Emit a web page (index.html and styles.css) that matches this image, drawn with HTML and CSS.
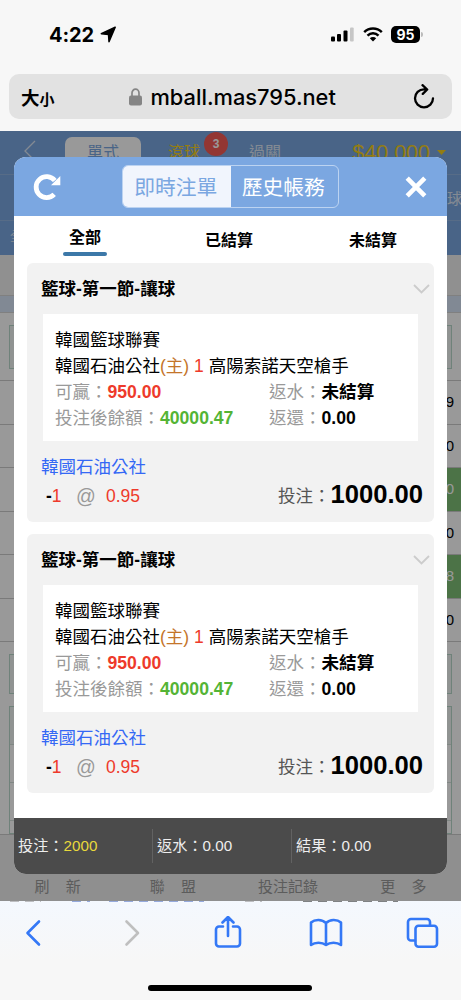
FILE: index.html
```html
<!DOCTYPE html>
<html lang="zh-Hant">
<head>
    <meta charset="UTF-8">
    <meta name="viewport" content="width=device-width, initial-scale=1.0">
    <title>即時注單</title>
    <link rel="stylesheet" href="styles.css">
</head>
<body>
    <div class="browser-top">
        <div class="status-bar">
            <span class="time">4:22</span>
            <svg class="location" width="17" height="17" viewBox="0 0 17 17"><path d="M15.200 1.300 1.300 7.800l7.200.7.500 7.200z" stroke="#000" stroke-width="1.500" stroke-linejoin="round"/></svg>
            <div class="status-icons">
                <svg width="24" height="15" viewBox="0 0 24 15">
                    <rect x="0" y="9.500" width="4" height="5" rx="1"/>
                    <rect x="6" y="7" width="4" height="7.500" rx="1"/>
                    <rect x="12.500" y="3.500" width="4" height="11" rx="1"/>
                    <rect x="19" y="0.500" width="3.700" height="14" rx="1" fill="#c6c6c6"/>
                </svg>
                <svg class="wifi" width="20" height="15" viewBox="0 0 20 15">
                    <path d="M1.200 5.200a12.600 12.600 0 0 1 17.600 0M4.500 8.600a7.900 7.900 0 0 1 11 0" fill="none" stroke="#000" stroke-width="2.500"/>
                    <path d="M10 14.500 6.800 11.300a4.600 4.600 0 0 1 6.400 0z"/>
                </svg>
                <span class="battery">95</span>
                <span class="battery-tip"></span>
            </div>
        </div>
        <div class="address-bar">
            <div class="text-size">大<small>小</small></div>
            <svg class="lock" width="13" height="18" viewBox="0 0 13 18"><path d="M3 8V5a3.500 3.800 0 0 1 7 0v3" fill="none" stroke="#858585" stroke-width="1.700"/><rect x="0" y="7.500" width="13" height="10" rx="2" fill="#858585"/></svg>
            <span class="url">mball.mas795.net</span>
            <svg class="reload" width="22" height="25" viewBox="0 0 22 25" fill="none" stroke="#000" stroke-width="2.300" stroke-linecap="round" stroke-linejoin="round"><path d="M11 5.300a9 9 0 1 0 9 9M11 5.300h3M9.500 1.200l4.700 4.300-4.400 4.400"/></svg>
        </div>
    </div>

    <div class="screen">
        <div class="page">
            <div class="page-header">
                <div class="page-nav">
                    <svg class="nav-back" width="12" height="22" viewBox="0 0 12 22" fill="none" stroke="#dbe6f5" stroke-width="1.300"><path d="M11 1 1 11l10 10"/></svg>
                    <span class="nav-active">單式</span>
                    <span class="nav-live">滾球<b class="nav-badge">3</b></span>
                    <span class="nav-parlay">過關</span>
                    <span class="nav-money">$40,000<i class="caret"></i></span>
                </div>
                <div class="page-sub">球</div>
                <div class="page-date">全</div>
            </div>
            <div class="page-gap"></div>
            <div class="page-strip"></div>
            <div class="page-box first"></div>
            <div class="odds">
                <div class="odd">9</div>
                <div class="odd">0</div>
                <div class="odd picked">0</div>
                <div class="odd">0</div>
                <div class="odd picked">8</div>
                <div class="odd">0</div>
            </div>
            <div class="page-box second"></div>
            <div class="page-box third"><div></div><div></div><div></div></div>
            <div class="page-footer">
                <span class="spaced">刷 新</span>
                <span class="spaced">聯 盟</span>
                <span>投注記錄</span>
                <span class="spaced">更 多</span>
            </div>
        </div>

        <div class="mask"></div>

        <div class="modal">
            <div class="modal-header">
                <svg width="28" height="28" viewBox="0 0 28 28"><path d="M21.200 21.400A10.500 10.500 0 1 1 21.800 7.500" fill="none" stroke="#fff" stroke-width="4.800"/><path d="M27.300 3v9.200H18z" fill="#fff"/></svg>
                <div class="switch">
                    <span class="on">即時注單</span>
                    <span>歷史帳務</span>
                </div>
                <svg class="close" width="22" height="22" viewBox="0 0 22 22"><path d="M2.200 2.200l17.600 17.600M19.800 2.200 2.200 19.800" stroke="#fff" stroke-width="4.600"/></svg>
            </div>
            <div class="tabs">
                <span class="tab current">全部</span>
                <span class="tab">已結算</span>
                <span class="tab">未結算</span>
            </div>

            <div class="bets">
                <div class="bet">
                    <div class="bet-title">籃球-第一節-讓球
                        <svg width="17" height="10" viewBox="0 0 17 10" fill="none" stroke="#ccc" stroke-width="1.800"><path d="M1 1l7.500 7.500L16 1"/></svg>
                    </div>
                    <div class="bet-info">
                        <div>韓國籃球聯賽</div>
                        <div>韓國石油公社<span class="home">(主)</span> <span class="red">1</span> 高陽索諾天空槍手</div>
                        <div class="cols"><span>可贏：<b class="red">950.00</b></span><span>返水：<b>未結算</b></span></div>
                        <div class="cols"><span>投注後餘額：<b class="green">40000.47</b></span><span>返還：<b>0.00</b></span></div>
                    </div>
                    <div class="pick">韓國石油公社</div>
                    <div class="stake">
                        <span class="line"><b>-</b>1</span>
                        <span class="at">@</span>
                        <span class="red">0.95</span>
                        <span class="amount">投注：<b>1000.00</b></span>
                    </div>
                </div>

                <div class="bet">
                    <div class="bet-title">籃球-第一節-讓球
                        <svg width="17" height="10" viewBox="0 0 17 10" fill="none" stroke="#ccc" stroke-width="1.800"><path d="M1 1l7.500 7.500L16 1"/></svg>
                    </div>
                    <div class="bet-info">
                        <div>韓國籃球聯賽</div>
                        <div>韓國石油公社<span class="home">(主)</span> <span class="red">1</span> 高陽索諾天空槍手</div>
                        <div class="cols"><span>可贏：<b class="red">950.00</b></span><span>返水：<b>未結算</b></span></div>
                        <div class="cols"><span>投注後餘額：<b class="green">40000.47</b></span><span>返還：<b>0.00</b></span></div>
                    </div>
                    <div class="pick">韓國石油公社</div>
                    <div class="stake">
                        <span class="line"><b>-</b>1</span>
                        <span class="at">@</span>
                        <span class="red">0.95</span>
                        <span class="amount">投注：<b>1000.00</b></span>
                    </div>
                </div>
            </div>

            <div class="totals">
                <div>投注：<span class="yellow">2000</span></div>
                <div>返水：0.00</div>
                <div>結果：0.00</div>
            </div>
        </div>
    </div>

    <div class="browser-bottom">
        <div class="peek"><i class="p1"></i><i class="p2"></i><i class="p3"></i><i class="p4"></i><i class="p5"></i></div>
        <div class="toolbar">
            <svg width="34" height="34" viewBox="0 0 34 34"><path d="M23 5.500 11.500 17 23 28.500"/></svg>
            <svg class="off" width="34" height="34" viewBox="0 0 34 34"><path d="M12.500 5.500 24 17 12.500 28.500"/></svg>
            <svg width="34" height="34" viewBox="0 0 34 34"><path d="M12 10.500H8a3 3 0 0 0-3 3V27.500a3 3 0 0 0 3 3h18a3 3 0 0 0 3-3V13.500a3 3 0 0 0-3-3h-4M17 20V1.500M11.500 6.500 17 1l5.500 5.500"/></svg>
            <svg width="34" height="34" viewBox="0 0 34 34"><path d="M17 7C13 3 6 3 2 6.500V29c4-3 11-3 15 0 4-3 11-3 15 0V6.500C28 3 21 3 17 7zM17 7v22"/></svg>
            <svg width="34" height="34" viewBox="0 0 34 34"><path d="M9 24.500H5a3 3 0 0 1-3-3V6a3 3 0 0 1 3-3h16a3 3 0 0 1 3 3v3.500"/><rect x="9.500" y="9.700" width="21.500" height="21" rx="3"/></svg>
        </div>
        <div class="home-bar"></div>
    </div>
</body>
</html>
```
FILE: styles.css
```css
* {
    box-sizing: border-box;
}
body {
    margin: 0;
    width: 461px;
    height: 1000px;
    overflow: hidden;
    font-family: "Liberation Sans", "Noto Sans CJK TC", sans-serif;
    color: #000;
    background: #f7f7f7;
}
svg {
    display: block;
    flex: none;
}

/* browser top */
.browser-top {
    height: 131px;
    background: #f7f7f7;
    font-family: Inter, "Noto Sans CJK TC", sans-serif;
}
.status-bar {
    display: flex;
    align-items: center;
    height: 74px;
    padding: 0 38px 5px 49px;
}
.time {
    width: 51px;
    font-size: 20px;
    font-weight: 700;
    letter-spacing: -0.1px;
}
.status-icons {
    display: flex;
    align-items: center;
    margin-left: auto;
}
.wifi {
    margin-left: 8px;
}
.battery {
    width: 29px;
    height: 17px;
    margin-left: 8px;
    border-radius: 5px;
    background: #000;
    color: #fff;
    font-size: 14px;
    font-weight: 700;
    line-height: 17px;
    text-align: center;
}
.battery-tip {
    width: 2px;
    height: 5px;
    margin-left: 1px;
    border-radius: 0 2px 2px 0;
    background: #bbb;
}
.address-bar {
    display: flex;
    align-items: center;
    height: 45px;
    margin: 0 9px;
    padding: 0 17px 0 12px;
    border-radius: 10px;
    background: #e2e2e2;
}
.text-size {
    width: 107px;
    font-size: 18.5px;
    font-weight: 700;
}
.text-size small {
    font-size: 15px;
}
.lock {
    margin-left: 0.500px;
}
.url {
    margin-left: 9px;
    font-size: 21.800px;
    font-weight: 500;
    white-space: nowrap;
}
.reload {
    margin-left: auto;
}

/* page behind the modal */
.screen {
    position: relative;
    height: 770px;
    overflow: hidden;
}
.page {
    display: flex;
    flex-direction: column;
    height: 770px;
    background: #fff;
}
.page-header {
    height: 124px;
    background: #7ba7e1;
    color: #dbe6f5;
}
.page-nav {
    display: flex;
    height: 44px;
    padding: 6px 15px 0 24px;
    border-bottom: 1px solid #92b4e2;
    font-size: 16px;
    line-height: 32px;
}
.nav-back {
    margin-top: 3px;
}
.nav-active {
    width: 76px;
    margin-left: 29px;
    border-radius: 7px 7px 0 0;
    background: #fff;
    color: #7ba7e1;
    text-align: center;
}
.nav-live {
    position: relative;
    margin-left: 27px;
    color: #f5d020;
}
.nav-badge {
    position: absolute;
    left: 36px;
    top: -5px;
    width: 24px;
    height: 24px;
    border-radius: 50%;
    background: #f55a55;
    color: #fff;
    font-size: 12px;
    line-height: 24px;
    text-align: center;
}
.nav-parlay {
    margin-left: 49px;
}
.nav-money {
    display: flex;
    margin-left: auto;
    color: #f5d020;
    font-size: 21.5px;
}
.caret {
    margin: 13px 0 0 7px;
    width: 9px;
    height: 5px;
    background: #f5d020;
    clip-path: polygon(0 0, 100% 0, 50% 100%);
}
.page-sub {
    height: 46px;
    padding-left: 447px;
    border-bottom: 1px solid #92b4e2;
    font-size: 15px;
    line-height: 47px;
}
.page-date {
    padding-left: 10px;
    font-size: 12px;
    line-height: 32px;
}
.page-gap {
    height: 41px;
    background: #f0f0f0;
    border-bottom: 1px solid #d5d5d5;
}
.page-strip {
    height: 17px;
    background: #d7e4f7;
    border-bottom: 1px solid #d5d5d5;
}
.page-box {
    margin: 12px 9px 0;
    border: 1px solid #b9d9cc;
    background: #f0f5f3;
}
.page-box.first {
    height: 44px;
    margin-bottom: 11px;
}
.odds {
    border-top: 1px solid #ccc;
}
.odd {
    height: 43.500px;
    padding-right: 7px;
    border-bottom: 1px solid #ccc;
    font-size: 15px;
    line-height: 42px;
    text-align: right;
}
.odd.picked {
    background: linear-gradient(to right, #fff 440px, #7fc077 440px);
    color: #fff;
}
.page-box.second {
    height: 40px;
}
.page-box.third {
    flex: 1;
    background: #fff;
}
.page-box.third div {
    height: 38px;
    border-bottom: 1px solid #d5e2dc;
}
.page-box.third div:first-child {
    background: #f0f5f3;
}
.page-footer {
    display: flex;
    flex: none;
    align-items: flex-end;
    height: 67px;
    padding-bottom: 5px;
    border-top: 1px solid #ccc;
    background: #eee;
    color: #999;
    font-size: 15px;
}
.page-footer span {
    flex: 1;
    text-align: center;
    white-space: nowrap;
}
.spaced {
    word-spacing: 12px;
}
.mask {
    position: absolute;
    inset: 0;
    background: rgba(0, 0, 0, .4);
}

/* modal */
.modal {
    position: absolute;
    left: 14px;
    top: 26px;
    display: flex;
    flex-direction: column;
    width: 433px;
    height: 717px;
    overflow: hidden;
    border-radius: 12px;
    background: #fff;
}
.modal-header {
    display: flex;
    align-items: center;
    height: 59px;
    padding: 0 20px 0 19px;
    background: #7ba7e1;
}
.switch {
    display: flex;
    width: 217px;
    height: 43px;
    margin-left: 61px;
    border: 1px solid #bcd3f1;
    border-radius: 6px;
    overflow: hidden;
    color: #fff;
    font-size: 20.800px;
    line-height: 43px;
}
.switch span {
    width: 108px;
    padding-right: 2px;
    text-align: center;
}
.switch .on {
    background: #f1f5fd;
    color: #7ba7e1;
}
.close {
    margin-left: auto;
}
.tabs {
    display: flex;
    height: 47px;
    padding: 1px 1px 0 0;
}
.tab {
    flex: 1;
    padding-right: 2px;
    font-size: 16px;
    font-weight: 700;
    line-height: 47px;
    text-align: center;
}
.tab.current {
    line-height: 41px;
}
.tab.current::after {
    content: "";
    display: block;
    width: 44px;
    height: 4px;
    margin: -6px auto 0;
    border-radius: 2px;
    background: #3c78a8;
}
.bets {
    display: flex;
    flex: 1;
    flex-direction: column;
    gap: 12px;
    padding: 0 13px;
}
.bet {
    height: 259px;
    padding: 0 11px 0 14px;
    border-radius: 6px;
    background: #f2f2f2;
    font-size: 17.500px;
}
.bet-title {
    display: flex;
    align-items: center;
    justify-content: space-between;
    height: 51px;
    padding-bottom: 2px;
    font-weight: 700;
}
.bet-title svg {
    margin: 3px -7px 0 0;
}
.bet-info {
    height: 127px;
    margin: 0 5px 0 2px;
    padding: 13px 0 0 12px;
    background: #fff;
    line-height: 26px;
    white-space: nowrap;
}
.bet-info > div {
    height: 26px;
}
.cols {
    display: grid;
    grid-template-columns: 214px 1fr;
    color: #999;
}
.cols b {
    color: #000;
    font-size: 17.600px;
}
.home {
    color: #c4752a;
}
.red, .cols .red {
    color: #ee3a2b;
}
.cols .green {
    color: #54b435;
}
.pick {
    margin-top: 13px;
    color: #3468f5;
    line-height: 26px;
}
.stake {
    display: flex;
    align-items: center;
    height: 32px;
    padding-left: 5px;
}
.line {
    width: 30px;
    color: #ee3a2b;
}
.line b {
    color: #000;
}
.at {
    width: 30px;
    color: #999;
    font-size: 19.500px;
}
.amount {
    display: flex;
    align-items: center;
    margin-left: auto;
    padding-bottom: 3px;
    color: #555;
}
.amount b {
    color: #000;
    font-size: 25.600px;
}
.totals {
    display: flex;
    height: 56px;
    align-items: center;
    background: #4b4b4b;
    color: #eee;
    font-size: 15.200px;
}
.totals div {
    width: 139px;
    height: 34px;
    padding-left: 4px;
    border-right: 1px solid #626262;
    line-height: 34px;
}
.totals div:last-child {
    border: 0;
}
.yellow {
    color: #e8d83c;
}

/* browser bottom */
.browser-bottom {
    height: 99px;
    background: linear-gradient(#f4f8fe, #f7f7f7 60%);
}
.peek {
    display: flex;
    height: 2px;
    padding-left: 10px;
    opacity: .6;
}
.peek i {
    height: 1px;
    background: repeating-linear-gradient(to right, currentColor 0 9px, transparent 9px 15px);
}
.p1 {
    width: 31px;
    color: #999;
}
.p2 {
    width: 18px;
    margin-left: 31px;
    color: #5877c8;
}
.p3 {
    width: 95px;
    margin-left: 19px;
    color: #5877c8;
}
.p4 {
    width: 17px;
    margin-left: 41px;
    color: #999;
}
.p5 {
    width: 95px;
    margin-left: 41px;
    color: #333;
}
.toolbar {
    display: flex;
    justify-content: space-between;
    padding: 13px 21px 0 16px;
}
.toolbar svg {
    fill: none;
    stroke: #3478f6;
    stroke-width: 2.600;
    stroke-linecap: round;
    stroke-linejoin: round;
}
.toolbar .off {
    stroke: #bfbfbf;
}
.home-bar {
    width: 164px;
    height: 6px;
    margin: 35px 0 0 148px;
    border-radius: 3px;
    background: #000;
}
```
